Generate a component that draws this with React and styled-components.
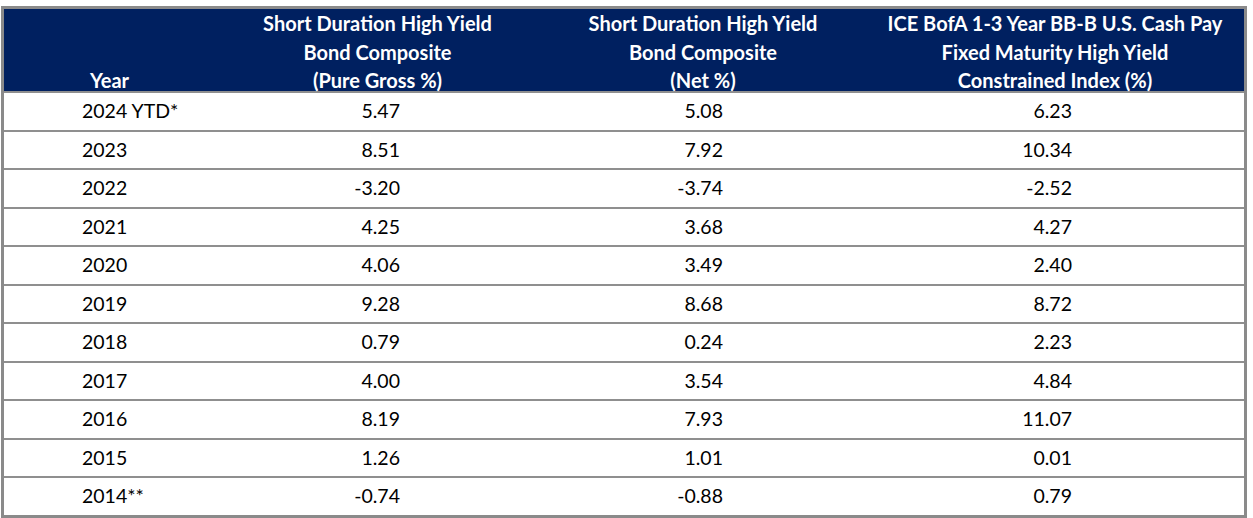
import styled, { createGlobalStyle } from "styled-components";

const GlobalStyle = createGlobalStyle`
  body {
    margin: 0;
    background: #ffffff;
    font-family: Lato, "Open Sans", sans-serif;
  }
`;

const columns = "211px 325px 326px 1fr";

const headers = [
  { label: ["Year"] },
  { label: ["Short Duration High Yield", "Bond Composite", "(Pure Gross %)"] },
  { label: ["Short Duration High Yield", "Bond Composite", "(Net %)"] },
  {
    label: [
      "ICE BofA 1-3 Year BB-B U.S. Cash Pay",
      "Fixed Maturity High Yield",
      "Constrained Index (%)",
    ],
  },
];

const rows = [
  ["2024 YTD*", "5.47", "5.08", "6.23"],
  ["2023", "8.51", "7.92", "10.34"],
  ["2022", "-3.20", "-3.74", "-2.52"],
  ["2021", "4.25", "3.68", "4.27"],
  ["2020", "4.06", "3.49", "2.40"],
  ["2019", "9.28", "8.68", "8.72"],
  ["2018", "0.79", "0.24", "2.23"],
  ["2017", "4.00", "3.54", "4.84"],
  ["2016", "8.19", "7.93", "11.07"],
  ["2015", "1.26", "1.01", "0.01"],
  ["2014**", "-0.74", "-0.88", "0.79"],
];

// right padding of the figures in each numeric column
const valuePad = [140, 143, 172];

const App = () => (
  <>
    <GlobalStyle />
    <Frame>
      <HeadRow>
        {headers.map((h, i) => (
          <HeadCell key={i}>
            <HeadText>
              {h.label.map((line) => (
                <div key={line}>{line}</div>
              ))}
            </HeadText>
          </HeadCell>
        ))}
      </HeadRow>
      {rows.map((r) => (
        <Row key={r[0]}>
          <YearCell>{r[0]}</YearCell>
          {r.slice(1).map((v, i) => (
            <ValueCell key={i} pad={valuePad[i]}>
              {v}
            </ValueCell>
          ))}
        </Row>
      ))}
    </Frame>
  </>
);

const Frame = styled.div`
  box-sizing: border-box;
  width: 1246px;
  margin: 6px 0 0 1px;
  border: 3px solid #8a8a8a;
  background: #ffffff;
`;

const HeadRow = styled.div`
  display: grid;
  grid-template-columns: ${columns};
  height: 82px;
  background: #002060;
  color: #ffffff;
  font-weight: 700;
  font-size: 20px;
  line-height: 28.5px;
`;

const HeadCell = styled.div`
  display: flex;
  flex-direction: column;
  justify-content: flex-end;
  align-items: center;
  text-align: center;
  white-space: nowrap;
`;

const HeadText = styled.div`
  margin-bottom: -2px;
`;

const Row = styled.div`
  display: grid;
  grid-template-columns: ${columns};
  height: 36.5px;
  border-top: 2px solid #8f8f8f;
  color: #000000;
  font-size: 19.5px;
  line-height: 36.5px;
`;

const YearCell = styled.div`
  padding-left: 78px;
  white-space: nowrap;
`;

const ValueCell = styled.div`
  text-align: right;
  padding-right: ${({ pad }) => pad}px;
`;

export default App;
